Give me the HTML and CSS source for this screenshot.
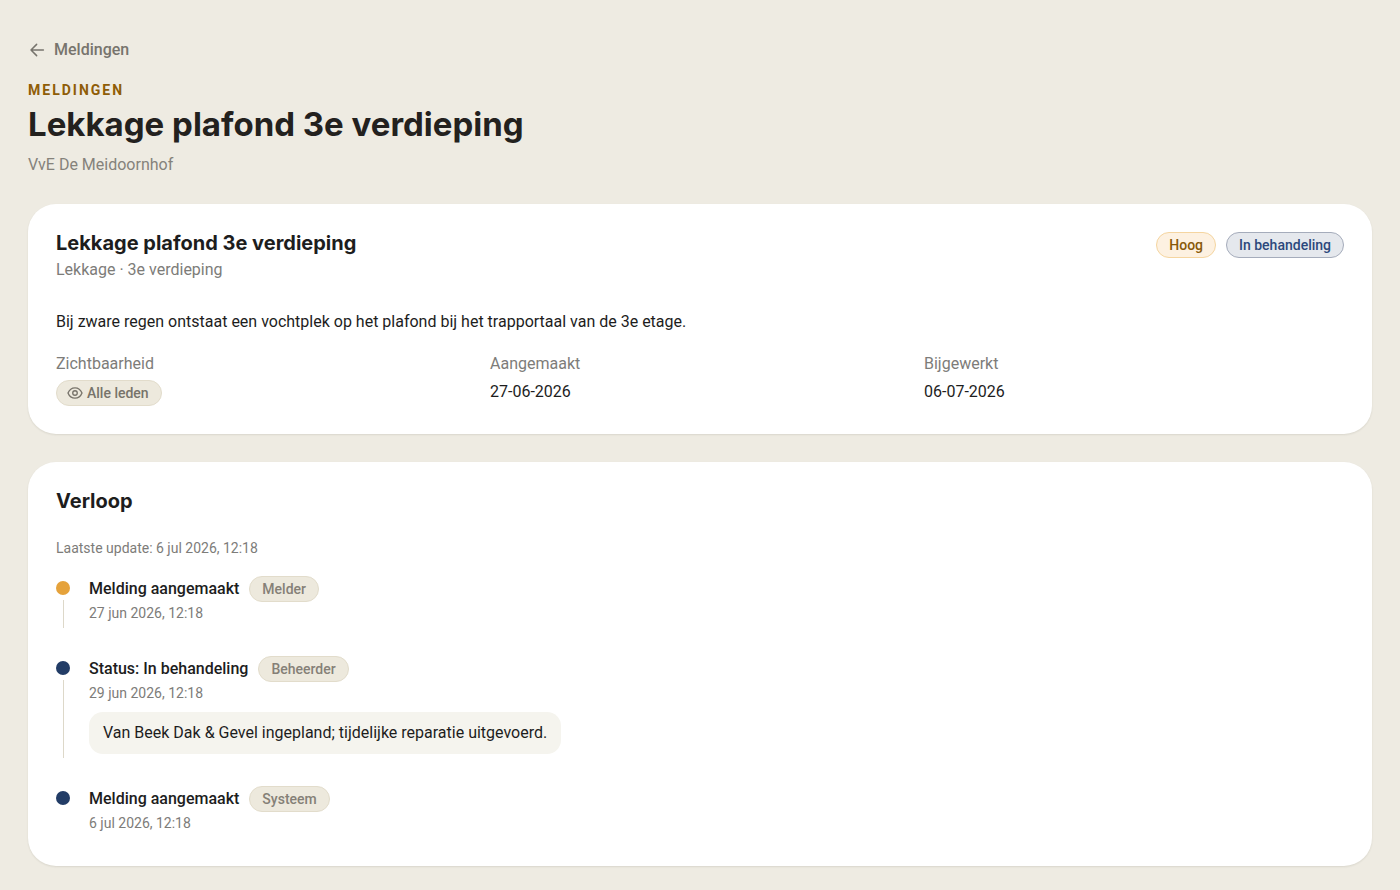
FILE: index.html
```html
<!DOCTYPE html>
<html lang="nl">
<head>
    <meta charset="UTF-8">
    <meta name="viewport" content="width=device-width, initial-scale=1.0">
    <title>Lekkage plafond 3e verdieping</title>
    <link rel="stylesheet" href="styles.css">
</head>
<body>
    <main class="page">
        <!-- Page header -->
        <header class="page-header">
            <a class="back-link" href="#">
                <svg class="back-icon" viewBox="0 0 24 24" aria-hidden="true">
                    <path d="M20.5 12H4M11.5 4.5L4 12l7.5 7.5"/>
                </svg>
                Meldingen
            </a>
            <p class="eyebrow">Meldingen</p>
            <h1>Lekkage plafond 3e verdieping</h1>
            <p class="subtitle">VvE De Meidoornhof</p>
        </header>

        <!-- Details -->
        <section class="card">
            <div class="card-header">
                <div>
                    <h2>Lekkage plafond 3e verdieping</h2>
                    <p class="muted">Lekkage · 3e verdieping</p>
                </div>
                <div class="badges">
                    <span class="badge badge-high">Hoog</span>
                    <span class="badge badge-progress">In behandeling</span>
                </div>
            </div>
            <p class="description">Bij zware regen ontstaat een vochtplek op het plafond bij het trapportaal van de 3e etage.</p>
            <dl class="facts">
                <div>
                    <dt>Zichtbaarheid</dt>
                    <dd>
                        <span class="badge badge-icon">
                            <svg class="eye-icon" viewBox="0 0 24 24" aria-hidden="true">
                                <path d="M1.5 12C3.5 7 7.3 4.2 12 4.2S20.5 7 22.5 12C20.5 17 16.7 19.8 12 19.8S3.5 17 1.5 12z"/>
                                <circle cx="12" cy="12" r="3.4"/>
                            </svg>
                            Alle leden
                        </span>
                    </dd>
                </div>
                <div>
                    <dt>Aangemaakt</dt>
                    <dd>27-06-2026</dd>
                </div>
                <div>
                    <dt>Bijgewerkt</dt>
                    <dd>06-07-2026</dd>
                </div>
            </dl>
        </section>

        <!-- Timeline -->
        <section class="card">
            <h2>Verloop</h2>
            <p class="last-update">Laatste update: 6 jul 2026, 12:18</p>
            <ol class="timeline">
                <li class="event">
                    <div class="rail"><span class="dot dot-new"></span><span class="line"></span></div>
                    <div class="event-body">
                        <div class="event-title"><h3>Melding aangemaakt</h3><span class="badge">Melder</span></div>
                        <time datetime="2026-06-27T12:18">27 jun 2026, 12:18</time>
                    </div>
                </li>
                <li class="event">
                    <div class="rail"><span class="dot"></span><span class="line"></span></div>
                    <div class="event-body">
                        <div class="event-title"><h3>Status: In behandeling</h3><span class="badge">Beheerder</span></div>
                        <time datetime="2026-06-29T12:18">29 jun 2026, 12:18</time>
                        <p class="note">Van Beek Dak &amp; Gevel ingepland; tijdelijke reparatie uitgevoerd.</p>
                    </div>
                </li>
                <li class="event">
                    <div class="rail"><span class="dot"></span></div>
                    <div class="event-body">
                        <div class="event-title"><h3>Melding aangemaakt</h3><span class="badge">Systeem</span></div>
                        <time datetime="2026-07-06T12:18">6 jul 2026, 12:18</time>
                    </div>
                </li>
            </ol>
        </section>
    </main>
</body>
</html>
```
FILE: styles.css
```css
* {
    box-sizing: border-box;
}

body {
    margin: 0;
    background-color: #eeebe2;
    color: #1d1d1d;
    font-family: Roboto, "Liberation Sans", sans-serif;
    font-size: 16px;
    line-height: 24px;
}

h1, h2, h3, p, dl, dd, ol {
    margin: 0;
    padding: 0;
}

.page {
    display: flex;
    flex-direction: column;
    gap: 28px;
    padding: 38px 28px 24px;
}

/* Page header */
.page-header {
    display: flex;
    flex-direction: column;
    align-items: flex-start;
}

.back-link {
    display: flex;
    align-items: center;
    gap: 8px;
    margin-bottom: 18px;
    color: #77746d;
    font-weight: 500;
    text-decoration: none;
}

.back-icon {
    width: 18px;
    height: 18px;
    fill: none;
    stroke: currentColor;
    stroke-width: 2;
    stroke-linecap: round;
    stroke-linejoin: round;
}

.eyebrow {
    color: #8f5d07;
    font-size: 14px;
    font-weight: 700;
    line-height: 20px;
    letter-spacing: 2px;
    text-transform: uppercase;
}

h1 {
    margin: 4px 0 10px;
    color: #23211e;
    font-family: Inter, "Liberation Sans", sans-serif;
    font-size: 33px;
    font-weight: 700;
    line-height: 40px;
}

.subtitle {
    color: #85827b;
    line-height: 22px;
}

/* Cards */
.card {
    padding: 28px;
    border-radius: 28px;
    background-color: #fff;
    box-shadow: 0 1px 2px rgba(40, 35, 20, 0.1);
}

.card-header {
    display: flex;
    justify-content: space-between;
    align-items: flex-start;
}

h2 {
    font-family: Inter, "Liberation Sans", sans-serif;
    font-size: 20px;
    font-weight: 700;
    line-height: 22px;
}

.muted, dt {
    color: #7d7c79;
}

.muted {
    margin-top: 4px;
}

.badges {
    display: flex;
    gap: 10px;
}

.badge {
    display: inline-flex;
    align-items: center;
    height: 26px;
    padding: 0 12px;
    border: 1px solid #e2dccb;
    border-radius: 13px;
    background-color: #ede9dd;
    color: #858077;
    font-size: 14px;
    font-weight: 500;
    line-height: 20px;
    white-space: nowrap;
}

.badge-high {
    border-color: #f5d5a0;
    background-color: #fdf1e1;
    color: #875909;
}

.badge-progress {
    border-color: #a5acbb;
    background-color: #e5e8ed;
    color: #2c487c;
}

.badge-icon {
    gap: 4px;
    padding-left: 10px;
    color: #77736a;
}

.eye-icon {
    width: 16px;
    height: 16px;
    fill: none;
    stroke: currentColor;
    stroke-width: 2;
}

.description {
    margin-top: 28px;
}

.facts {
    display: grid;
    grid-template-columns: repeat(3, 1fr);
    gap: 14px;
    margin-top: 18px;
}

dd {
    display: flex;
    margin-top: 4px;
}

/* Timeline */
.last-update, time {
    color: #7d7c79;
    font-size: 14px;
    line-height: 22px;
}

.last-update {
    margin-top: 25px;
}

.timeline {
    display: flex;
    flex-direction: column;
    gap: 28px;
    margin-top: 17px;
    list-style: none;
}

.event {
    display: flex;
    gap: 19px;
}

.rail {
    display: flex;
    flex-direction: column;
    align-items: center;
    gap: 5px;
    width: 14px;
    padding-top: 5px;
}

.dot {
    width: 14px;
    height: 14px;
    border-radius: 50%;
    background-color: #223c66;
}

.dot-new {
    background-color: #e5a23b;
}

.line {
    flex: 1;
    width: 1px;
    background-color: #ddd8c9;
}

.event-body {
    display: flex;
    flex-direction: column;
    align-items: flex-start;
    padding-bottom: 4px;
}

.event-title {
    display: flex;
    align-items: center;
    gap: 10px;
}

h3 {
    font-size: 16px;
    font-weight: 500;
    line-height: 24px;
}

.note {
    margin-top: 8px;
    padding: 9px 14px;
    border-radius: 14px;
    background-color: #f5f4ee;
}
```
